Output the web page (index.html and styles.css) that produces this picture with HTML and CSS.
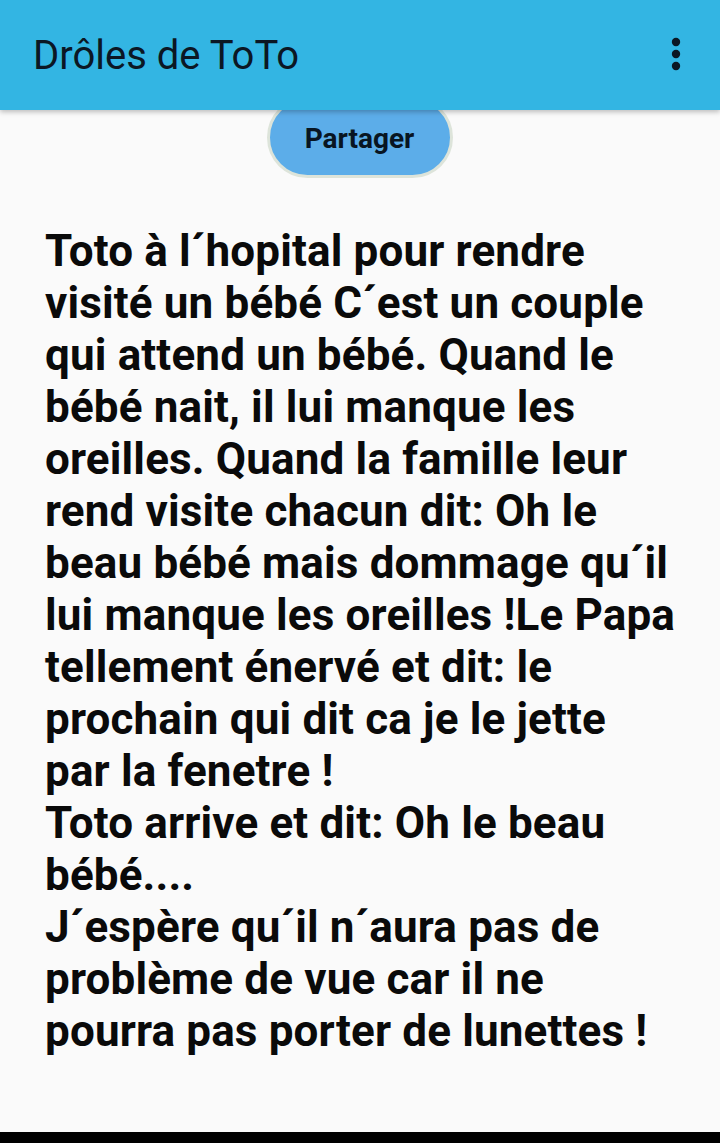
FILE: index.html
```html
<!DOCTYPE html>
<html lang="fr">
<head>
<meta charset="utf-8">
<title>Drôles de ToTo</title>
<link rel="stylesheet" href="styles.css">
</head>
<body>
<div class="screen">
  <header class="appbar">
    <h1 class="title">Drôles de ToTo</h1>
    <button class="menu" aria-label="Plus d'options">
      <svg width="12" height="36" viewBox="0 0 12 36"><circle cx="6" cy="6" r="4.2"/><circle cx="6" cy="18" r="4.2"/><circle cx="6" cy="30" r="4.2"/></svg>
    </button>
  </header>
  <main class="content">
    <div class="share-row"><button class="share">Partager</button></div>
    <p class="joke">Toto à l&#8288;´hopital pour rendre visité un bébé C&#8288;´est un couple qui attend un bébé. Quand le bébé nait, il lui manque les oreilles. Quand la famille leur rend visite chacun dit: Oh le beau bébé mais dommage qu&#8288;´il lui manque les oreilles !Le Papa tellement énervé et dit: le prochain qui dit ca je le jette par la fenetre !<br>Toto arrive et dit: Oh le beau bébé....<br>J&#8288;´espère qu&#8288;´il n&#8288;´aura pas de problème de vue car il ne pourra pas porter de lunettes !</p>
  </main>
  <div class="navedge"></div>
</div>
</body>
</html>
```
FILE: styles.css
```css
html, body {
  margin: 0;
  padding: 0;
  background: #fafafa;
}
.screen {
  width: 720px;
  height: 1143px;
  display: flex;
  flex-direction: column;
  font-family: Roboto, "Noto Sans", "Liberation Sans", sans-serif;
  overflow: hidden;
}
.appbar {
  position: relative;
  z-index: 2;
  height: 110px;
  flex: none;
  background: #33b5e3;
  display: flex;
  align-items: center;
  justify-content: space-between;
  padding: 0 38px 0 33px;
  box-sizing: border-box;
  box-shadow: 0 2px 5px rgba(0, 0, 0, 0.25);
}
.title {
  margin: 0;
  font-size: 40px;
  font-weight: 400;
  color: #0b1724;
  line-height: 1;
  padding-top: 2px;
}
.menu {
  border: 0;
  background: none;
  padding: 0;
  width: 12px;
  height: 36px;
  fill: #0b1724;
  display: block;
  margin-bottom: 2px;
}
.menu svg { display: block; }
.content {
  flex: 1;
  display: flex;
  flex-direction: column;
}
.share-row {
  display: flex;
  justify-content: center;
  margin-top: -13px;
  padding-right: 1px;
}
.share {
  width: 186px;
  height: 81px;
  border-radius: 41px;
  border: 3px solid #dde4da;
  background: #5cade9;
  color: #081522;
  font-family: Roboto, "Noto Sans", sans-serif;
  font-weight: 700;
  font-size: 28px;
  padding: 0;
  padding-top: 2px;
  box-sizing: border-box;
}
.joke {
  margin: 47px 0 0;
  padding: 0 42px 0 45px;
  font-size: 44px;
  font-weight: 700;
  letter-spacing: 0.15px;
  line-height: 52px;
  color: #0a0a0a;
}
.navedge {
  height: 11px;
  flex: none;
  background: #000;
}
```
